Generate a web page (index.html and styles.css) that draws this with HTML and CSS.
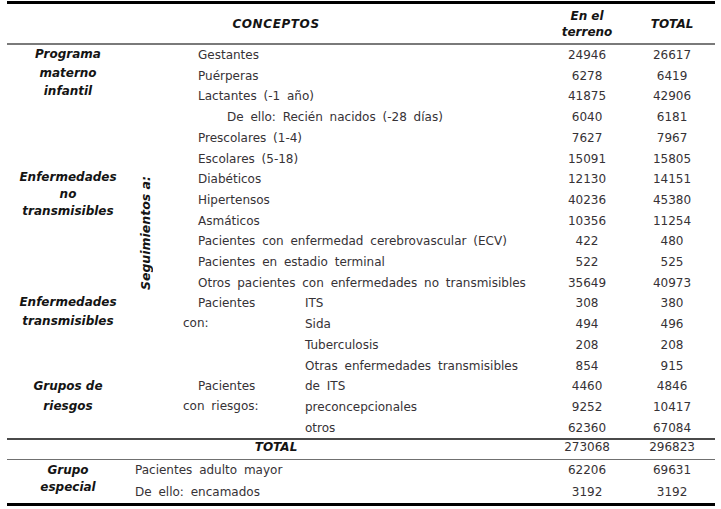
FILE: index.html
```html
<!DOCTYPE html>
<html lang="es">
<head>
<meta charset="utf-8">
<title>Conceptos</title>
<link rel="stylesheet" href="styles.css">
</head>
<body>
<table class="tabla">
  <colgroup>
    <col class="c-cat">
    <col class="c-seg">
    <col class="c-sub">
    <col class="c-item">
    <col class="c-num1">
    <col class="c-num2">
  </colgroup>
  <thead>
    <tr class="head">
      <th colspan="4" class="h-conceptos">CONCEPTOS</th>
      <th class="h-num">En el<br>terreno</th>
      <th class="h-num">TOTAL</th>
    </tr>
  </thead>
  <tbody>
    <tr>
      <td rowspan="6" class="cat cat-prog">Programa<br>materno<br>infantil</td>
      <td rowspan="19" class="seg"><span class="seg-text">Seguimientos a:</span></td>
      <td colspan="2" class="item">Gestantes</td>
      <td class="num">24946</td><td class="num">26617</td>
    </tr>
    <tr><td colspan="2" class="item">Puérperas</td><td class="num">6278</td><td class="num">6419</td></tr>
    <tr><td colspan="2" class="item">Lactantes (-1 año)</td><td class="num">41875</td><td class="num">42906</td></tr>
    <tr><td colspan="2" class="item item-sub">De ello: Recién nacidos (-28 días)</td><td class="num">6040</td><td class="num">6181</td></tr>
    <tr><td colspan="2" class="item">Prescolares (1-4)</td><td class="num">7627</td><td class="num">7967</td></tr>
    <tr><td colspan="2" class="item">Escolares (5-18)</td><td class="num">15091</td><td class="num">15805</td></tr>
    <tr>
      <td rowspan="6" class="cat cat-ent">Enfermedades<br>no<br>transmisibles</td>
      <td colspan="2" class="item">Diabéticos</td><td class="num">12130</td><td class="num">14151</td>
    </tr>
    <tr><td colspan="2" class="item">Hipertensos</td><td class="num">40236</td><td class="num">45380</td></tr>
    <tr><td colspan="2" class="item">Asmáticos</td><td class="num">10356</td><td class="num">11254</td></tr>
    <tr><td colspan="2" class="item">Pacientes con enfermedad cerebrovascular (ECV)</td><td class="num">422</td><td class="num">480</td></tr>
    <tr><td colspan="2" class="item">Pacientes en estadio terminal</td><td class="num">522</td><td class="num">525</td></tr>
    <tr><td colspan="2" class="item">Otros pacientes con enfermedades no transmisibles</td><td class="num">35649</td><td class="num">40973</td></tr>
    <tr>
      <td rowspan="4" class="cat cat-et">Enfermedades<br>transmisibles</td>
      <td rowspan="4" class="group">Pacientes<br>con:</td>
      <td class="sub">ITS</td><td class="num">308</td><td class="num">380</td>
    </tr>
    <tr><td class="sub">Sida</td><td class="num">494</td><td class="num">496</td></tr>
    <tr><td class="sub">Tuberculosis</td><td class="num">208</td><td class="num">208</td></tr>
    <tr><td class="sub">Otras enfermedades transmisibles</td><td class="num">854</td><td class="num">915</td></tr>
    <tr>
      <td rowspan="3" class="cat cat-gr">Grupos de<br>riesgos</td>
      <td rowspan="3" class="group">Pacientes<br>con riesgos:</td>
      <td class="sub">de ITS</td><td class="num">4460</td><td class="num">4846</td>
    </tr>
    <tr><td class="sub">preconcepcionales</td><td class="num">9252</td><td class="num">10417</td></tr>
    <tr class="last-data"><td class="sub">otros</td><td class="num">62360</td><td class="num">67084</td></tr>
    <tr class="total">
      <td colspan="4" class="total-label">TOTAL</td>
      <td class="num">273068</td><td class="num">296823</td>
    </tr>
    <tr class="special">
      <td rowspan="2" class="cat cat-esp">Grupo<br>especial</td>
      <td colspan="3" class="item-esp">Pacientes adulto mayor</td>
      <td class="num">62206</td><td class="num">69631</td>
    </tr>
    <tr class="special"><td colspan="3" class="item-esp">De ello: encamados</td><td class="num">3192</td><td class="num">3192</td></tr>
  </tbody>
</table>
</body>
</html>
```

FILE: styles.css
```css
html, body {
  margin: 0;
  padding: 0;
  background: #ffffff;
}

body {
  padding: 1px 0 0 7px;
  font-family: "DejaVu Sans", Verdana, sans-serif;
  font-size: 12px;
  color: #363236;
}

.tabla {
  width: 708px;
  table-layout: fixed;
  border-collapse: collapse;
  border-top: 3px solid #000;
  border-bottom: 3px solid #000;
}

.c-cat { width: 122px; }
.c-seg { width: 41px; }
.c-sub { width: 130px; }
.c-item { width: 245px; }
.c-num1 { width: 84px; }
.c-num2 { width: 86px; }

td, th {
  padding: 0;
  vertical-align: middle;
  height: 20.7px;
  line-height: 20.7px;
  white-space: nowrap;
}

.head {
  border-bottom: 2px solid #7a7a7a;
}

.head th {
  height: 39px;
  line-height: 16px;
  font-weight: bold;
  font-style: italic;
  color: #141414;
  text-align: center;
}

.h-conceptos {
  letter-spacing: 0.6px;
}

.cat {
  vertical-align: top;
  text-align: center;
  font-weight: bold;
  font-style: italic;
  color: #141414;
}

.cat-prog { line-height: 18.5px; }
.cat-ent { line-height: 17px; }
.cat-et { line-height: 19px; }
.cat-gr { line-height: 20px; }
.cat-esp { line-height: 17px; padding-top: 2px; }

.seg {
  text-align: center;
  vertical-align: middle;
  padding-bottom: 11px;
  padding-right: 7px;
}

.seg-text {
  display: inline-block;
  writing-mode: vertical-rl;
  transform: rotate(180deg);
  font-weight: bold;
  font-style: italic;
  font-size: 12.5px;
  line-height: 14px;
  color: #141414;
}

.item {
  padding-left: 28px;
  word-spacing: 3px;
}

.item-sub {
  padding-left: 57px;
}

.group {
  vertical-align: top;
  padding-left: 13px;
  text-indent: 15px;
  line-height: 20px;
  word-spacing: 3px;
}

.sub {
  padding-left: 5px;
  word-spacing: 3px;
}

.num {
  text-align: center;
}

.last-data {
  border-bottom: 2px solid #4a4a4a;
}

.total {
  border-bottom: 1px solid #707070;
}

.total td {
  height: 19.7px;
  line-height: 15px;
  padding-bottom: 4px;
  box-sizing: border-box;
}

.total-label {
  text-align: center;
  font-weight: bold;
  font-style: italic;
  color: #141414;
}

.special td {
  height: 21.5px;
  line-height: 21.5px;
}

.special td.cat-esp {
  line-height: 17px;
}

.item-esp {
  padding-left: 6px;
  word-spacing: 3px;
}
```
